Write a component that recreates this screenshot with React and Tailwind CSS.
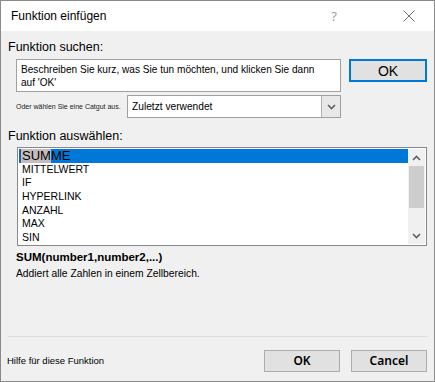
import React from "react";

const Chev = ({ up, className }) => (
  <svg width="9" height="6" viewBox="0 0 9 6" className={className}>
    {up ? (
      <path d="M1 5 L4.5 1.5 L8 5" fill="none" stroke="#606060" strokeWidth="1.6" />
    ) : (
      <path d="M1 1 L4.5 4.5 L8 1" fill="none" stroke="#606060" strokeWidth="1.6" />
    )}
  </svg>
);

export default function App() {
  const items = ["MITTELWERT", "IF", "HYPERLINK", "ANZAHL", "MAX", "SIN"];
  return (
    <div
      className="w-[435px] h-[382px] border border-[#8a8a8a] flex flex-col bg-[#f0f0f0] text-black"
      style={{ fontFamily: '"Liberation Sans", Arial, sans-serif' }}
    >
      {/* title bar */}
      <div className="h-[30px] bg-white flex items-center shrink-0">
        <div className="ml-[10px] text-[12px] leading-[16px] text-black">Funktion einfügen</div>
        <div className="ml-auto mr-[66px] text-[13px] text-[#a0a0a0] leading-[16px]" style={{ fontFamily: '"Noto Sans", sans-serif' }}>?</div>
        <svg width="12" height="12" viewBox="0 0 12 12" className="mr-[19px]">
          <path d="M0.5 0.5 L11.5 11.5 M11.5 0.5 L0.5 11.5" stroke="#6f6f6f" strokeWidth="1" />
        </svg>
      </div>

      {/* body */}
      <div className="flex-1 flex flex-col">
        <div className="h-[28px] pt-[8px] pl-[7px] text-[12.5px] leading-[16px]">Funktion suchen:</div>

        <div className="h-[33px] flex items-start">
          <div className="ml-[15px] w-[325px] h-[33px] bg-white border border-[#a0a0a0] pl-[4px] pt-[3px] text-[10.1px] leading-[13px] whitespace-nowrap">
            Beschreiben Sie kurz, was Sie tun möchten, und klicken Sie dann
            <br />
            auf 'OK'
          </div>
          <div className="ml-[8px] w-[78px] h-[23px] bg-[#e1e1e1] border-2 border-[#0078d7] flex items-center justify-center text-[14px] leading-[16px]">
            OK
          </div>
        </div>

        <div className="mt-[3px] h-[23px] flex items-center">
          <div className="ml-[15px] w-[111px] text-[7px] leading-[9px] text-[#222]">Oder wählen Sie eine Catgut aus.</div>
          <div className="w-[214px] h-[23px] bg-white border border-[#a0a0a0] flex items-center">
            <div className="pl-[4px] text-[10.2px] leading-[14px] flex-1">Zuletzt verwendet</div>
            <div className="w-[19px] h-[21px] bg-[#e8e8e8] border-l border-[#b0b0b0] flex items-center justify-center">
              <Chev />
            </div>
          </div>
        </div>

        <div className="h-[29px] pt-[10px] pl-[7px] text-[12.5px] leading-[16px]">Funktion auswählen:</div>

        <div className="ml-[16px] w-[410px] h-[99px] bg-white border border-[#828790] p-[1px] flex">
          <div className="flex-1 flex flex-col">
            <div className="h-[13.7px] bg-[#0078d7] flex items-center text-[13px] leading-[14px]">
              <span className="w-[2px] h-[13px] bg-[#1a5fb4]"></span>
              <span className="bg-[#c4bcbc] pl-[1px]">SUM</span>
              <span>ME</span>
            </div>
            {items.map((t) => (
              <div key={t} className="h-[13.7px] pl-[3px] text-[10.5px] leading-[13.7px]">
                {t}
              </div>
            ))}
          </div>
          <div className="w-[17px] bg-[#f0f0f0] flex flex-col">
            <div className="h-[17px] flex items-center justify-center">
              <Chev up />
            </div>
            <div className="h-[42px] bg-[#cdcdcd] mx-[1px]"></div>
            <div className="flex-1"></div>
            <div className="h-[17px] flex items-center justify-center">
              <Chev />
            </div>
          </div>
        </div>

        <div className="mt-[4px] pl-[15px] text-[11.5px] leading-[15px] font-bold">SUM(number1,number2,...)</div>
        <div className="mt-[2px] pl-[15px] text-[10.3px] leading-[14px]">Addiert alle Zahlen in einem Zellbereich.</div>

        <div className="flex-1"></div>
        <div className="ml-[7px] w-[420px] h-px bg-[#dcdcdc]"></div>

        <div className="mt-[13px] mb-[9px] h-[22px] flex items-center">
          <div className="pl-[6px] text-[9.5px] leading-[13px] mt-[-1px]">Hilfe für diese Funktion</div>
          <div className="ml-auto w-[76px] h-[22px] bg-[#e1e1e1] border border-[#adadad] flex items-center justify-center text-[12px] font-semibold" style={{ fontFamily: '"Noto Sans", sans-serif' }}>
            OK
          </div>
          <div className="ml-[11px] mr-[7px] w-[76px] h-[22px] bg-[#e1e1e1] border border-[#adadad] flex items-center justify-center text-[12px] font-semibold" style={{ fontFamily: '"Noto Sans", sans-serif' }}>
            Cancel
          </div>
        </div>
      </div>
    </div>
  );
}
